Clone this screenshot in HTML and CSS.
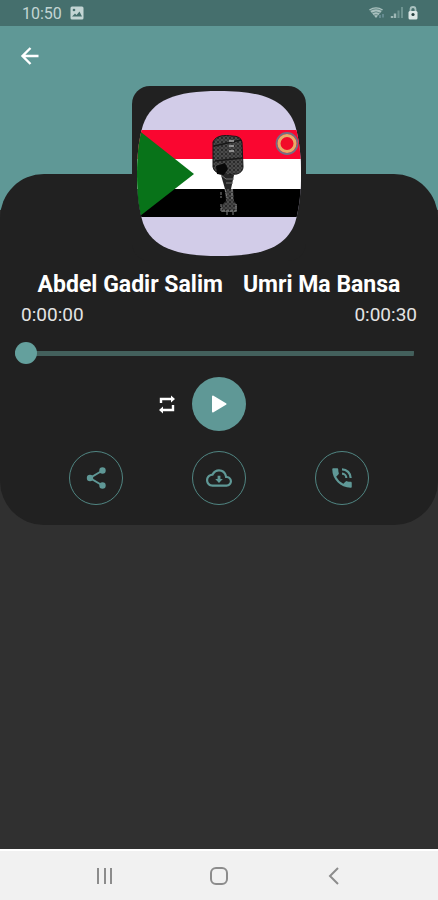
FILE: index.html
```html
<!DOCTYPE html>
<html lang="en">
<head>
<meta charset="utf-8">
<meta name="viewport" content="width=device-width, initial-scale=1">
<title>Abdel Gadir Salim - Umri Ma Bansa</title>
<link rel="stylesheet" href="styles.css">
</head>
<body>
<div class="status">
  <div class="status-group">
    <time>10:50</time>
    <svg class="picture" width="14" height="14" viewBox="0 0 14 14" aria-hidden="true"><rect x="0.5" y="0.5" width="13" height="13" rx="1.5" fill="#c3d5d4"/><path d="M2 10.5 5 7.5 6.5 9 9.5 5.5 12 10.500z" fill="#456f6d"/><circle cx="4" cy="4" r="1.300" fill="#456f6d"/></svg>
  </div>
  <div class="status-group status-icons">
    <svg width="18" height="16" viewBox="0 0 18 16" aria-hidden="true"><path d="M1 4.500Q8 0 15 4.500L8 13z" fill="#a9c0be"/><path d="M2 5.800Q8 2 14 5.800M4 8Q8 5.500 12 8M6 10.200Q8 9 10 10.200" fill="none" stroke="#537b79" stroke-width="0.800"/><path d="M12 13V10M15 9V12.500" stroke="#7397a0" stroke-width="1.400"/></svg>
    <svg width="14" height="14" viewBox="0 0 14 14" aria-hidden="true"><path d="M2 12V10M5 12V7.500" stroke="#9db7b5" stroke-width="2.400"/><path d="M8.500 12V4.500M12 12V1" stroke="#6e9491" stroke-width="2"/></svg>
    <svg width="10" height="14" viewBox="0 0 10 14" aria-hidden="true"><path d="M2.500 6V3.500a2.500 2.500 0 0 1 5 0V6" fill="none" stroke="#a9c1bf" stroke-width="1.800"/><rect x="0.500" y="5" width="9" height="8.500" rx="1.500" fill="#dce7e6"/><circle cx="5" cy="8.500" r="1.600" fill="#25403f"/></svg>
  </div>
</div>
<header class="hero">
  <button class="back" type="button" aria-label="Back">
    <svg width="24" height="24" viewBox="0 0 24 24" fill="none" stroke="#fff" stroke-width="2.400" aria-hidden="true"><path d="M20.500 12H4.500M12.500 4l-8 8 8 8"/></svg>
  </button>
</header>
<main class="player">
  <div class="cover">
    <svg class="art" viewBox="0 0 164 165" role="img" aria-label="Flag of Sudan with a microphone">
      <defs>
        <clipPath id="shape"><path d="M82 0C126 0 149 9 158 34C163 51 164 68 164 83C164 98 163 115 158 132C149 156 126 165 82 165C38 165 15 156 6 132C1 115 0 98 0 83C0 68 1 51 6 34C15 9 38 0 82 0Z"/></clipPath>
        <pattern id="grain" width="4" height="4" patternUnits="userSpaceOnUse"><rect width="4" height="4" fill="#292929"/><path d="M0 1h2M2 3h2" stroke="#858585" stroke-width="0.700"/><path d="M3 0v2" stroke="#555" stroke-width="0.700"/></pattern>
      </defs>
      <g clip-path="url(#shape)">
        <rect width="164" height="165" fill="#d2cce8"/>
        <rect y="39" width="164" height="29" fill="#fa0630"/>
        <rect y="68" width="164" height="30" fill="#fff"/>
        <rect y="98" width="164" height="28" fill="#000"/>
        <path d="M0 38 57 83 3 125 0 126z" fill="#087319"/>
        <path d="M76 51C79 44 88 44 95 45Q104 45 105 51L106 76Q106 81 100 83L87 84Q77 82 76 76z" fill="url(#grain)" stroke="#171717"/>
        <path d="M77 55 104 49M78 70l28-3" stroke="#171717" stroke-width="1.500"/>
        <path d="M92 50h5M92 55h5M92 60h5" stroke="#aaa" stroke-width="1.500"/>
        <path d="M79 75l9-3 3 6-4 6-7-1z" fill="#080808"/>
        <path d="M84 84h13l-3 14h-6z" fill="#252525"/>
        <path d="M84 84l5 4h8M89 92h7" fill="none" stroke="#777" stroke-width="1"/>
        <path d="M88 98h8l1 12 3 4v7H84v-6l5-5z" fill="url(#grain)"/>
        <path d="M84 101v6M88 98l2 9M95 98v10M84 113v7h15v-7M90 121v4M96 121v4" fill="none" stroke="#858585" stroke-width="1" stroke-dasharray="3 1"/>
        <circle cx="150" cy="52.500" r="10.500" fill="none" stroke="#747083" stroke-width="1.800"/>
        <circle cx="150" cy="52.500" r="8" fill="#f20a29" stroke="#e7ad68" stroke-width="3"/>
      </g>
    </svg>
  </div>
  <h1 class="title"><span>Abdel Gadir Salim</span><span>Umri Ma Bansa</span></h1>
  <div class="times"><span>0:00:00</span><span>0:00:30</span></div>
  <input class="seek" type="range" min="0" max="30" value="0" aria-label="Playback position">
  <div class="controls">
    <button class="repeat" type="button" aria-label="Repeat">
      <svg width="18" height="20" viewBox="0 0 18 20" aria-hidden="true"><path d="M3 9V5h10M15 11v5H5" fill="none" stroke="#fff" stroke-width="2.400"/><path d="M13 1.500 17 5l-4 3.500zM5 12.500 1 16l4 3.500z" fill="#fff"/></svg>
    </button>
    <button class="play" type="button" aria-label="Play">
      <svg width="18" height="20" viewBox="0 0 18 20" aria-hidden="true"><path d="M3 2.500 15.500 10 3 17.500z" fill="#fff" stroke="#fff" stroke-width="2" stroke-linejoin="round"/></svg>
    </button>
  </div>
  <div class="actions">
    <button type="button" aria-label="Share">
      <svg width="24" height="24" viewBox="0 0 24 24" aria-hidden="true"><path d="M18.500 4.500 6 12l12.500 7.500" fill="none" stroke="currentColor" stroke-width="2"/><g fill="currentColor"><circle cx="18.500" cy="4.500" r="3.200"/><circle cx="6" cy="12" r="3.200"/><circle cx="18.500" cy="19.500" r="3.200"/></g></svg>
    </button>
    <button type="button" aria-label="Download">
      <svg width="26" height="26" viewBox="0 0 24 24" fill="currentColor" aria-hidden="true"><path d="M19.350 10.040C18.670 6.590 15.640 4 12 4 9.110 4 6.600 5.640 5.350 8.040 2.340 8.360 0 10.910 0 14c0 3.310 2.690 6 6 6h13c2.760 0 5-2.240 5-5 0-2.640-2.050-4.780-4.650-4.960zM19 18H6c-2.210 0-4-1.790-4-4 0-2.050 1.530-3.760 3.560-3.970l1.070-.11.5-.95C8.080 7.140 9.940 6 12 6c2.620 0 4.880 1.860 5.390 4.430l.3 1.500 1.530.11c1.560.1 2.780 1.410 2.780 2.960 0 1.650-1.350 3-3 3z"/><path d="M10.700 10h2.600v3h2.200L12 16.500 8.500 13h2.200z"/></svg>
    </button>
    <button type="button" aria-label="Set as ringtone">
      <svg width="26" height="26" viewBox="0 0 24 24" fill="currentColor" aria-hidden="true"><path d="M20 15.500c-1.250 0-2.450-.2-3.570-.57a1 1 0 0 0-1.020.24l-2.200 2.200a15.050 15.050 0 0 1-6.590-6.590l2.200-2.210a1 1 0 0 0 .25-1A11.360 11.360 0 0 1 8.500 4c0-.55-.45-1-1-1H4c-.55 0-1 .45-1 1 0 9.390 7.610 17 17 17 .55 0 1-.45 1-1v-3.500c0-.55-.45-1-1-1zM19 12h2a9 9 0 0 0-9-9v2a7 7 0 0 1 7 7zm-4 0h2a5 5 0 0 0-5-5v2a3 3 0 0 1 3 3z"/></svg>
    </button>
  </div>
</main>
<nav class="nav" aria-label="System">
  <button type="button" aria-label="Recent apps"><svg width="20" height="20" viewBox="0 0 20 20" fill="none" stroke="#8c8c8c" stroke-width="2" aria-hidden="true"><path d="M3 2v16M10 2v16M16 2v16"/></svg></button>
  <button type="button" aria-label="Home"><svg width="20" height="20" viewBox="0 0 20 20" fill="none" stroke="#8c8c8c" stroke-width="2" aria-hidden="true"><rect x="2" y="2" width="16" height="16" rx="5"/></svg></button>
  <button type="button" aria-label="Back"><svg width="20" height="20" viewBox="0 0 20 20" fill="none" stroke="#8c8c8c" stroke-width="2" aria-hidden="true"><path d="M14 2 6 10l8 8"/></svg></button>
</nav>
</body>
</html>
```
FILE: styles.css
```css
* { box-sizing: border-box; }

body {
  margin: 0;
  min-height: 100vh;
  display: flex;
  flex-direction: column;
  background: #303030;
  color: #fff;
  font-family: Roboto, "Liberation Sans", sans-serif;
}

button {
  display: flex;
  align-items: center;
  justify-content: center;
  padding: 0;
  border: 0;
  background: none;
  color: #5f9896;
  cursor: pointer;
}

svg { display: block; }

.status {
  display: flex;
  justify-content: space-between;
  align-items: center;
  height: 26px;
  padding: 0 20px 0 22px;
  background: #456f6d;
  color: #c3d5d4;
  font-size: 16px;
}

.status-group { display: flex; align-items: center; gap: 8px; }
.status-icons { gap: 4px; }

.hero {
  height: 184px;
  padding: 16px 16px 0;
  background: #5f9896;
}

.back { width: 28px; height: 28px; }

.player {
  display: flex;
  flex-direction: column;
  margin-top: -36px;
  padding-bottom: 20px;
  border-radius: 44px;
  background: #212121;
}

.cover {
  align-self: center;
  width: 174px;
  margin-top: -88px;
  padding: 5px;
  border-radius: 18px;
  background: #212121;
}

.art { width: 100%; height: auto; }

.title {
  display: flex;
  justify-content: center;
  gap: 20px;
  margin: 8px 0 0;
  font-size: 23px;
  line-height: 32px;
  font-weight: 700;
}

.times {
  display: flex;
  justify-content: space-between;
  padding: 0 21px;
  color: #e4e4e4;
  font-size: 19px;
  line-height: 28px;
}

.seek {
  appearance: none;
  height: 24px;
  margin: 12px 24px 0 15px;
  border-radius: 12px;
  background: linear-gradient(#43605c, #43605c) center / 100% 5px no-repeat;
}

.seek::-webkit-slider-thumb {
  appearance: none;
  width: 22px;
  height: 22px;
  border-radius: 50%;
  background: #64a09d;
}

.controls {
  display: grid;
  grid-template-columns: 1fr 54px 1fr;
  align-items: center;
  column-gap: 16px;
  margin-top: 12px;
}

.repeat { justify-self: end; }

.play {
  width: 54px;
  height: 54px;
  border-radius: 50%;
  background: #5f9896;
}

.actions {
  display: flex;
  justify-content: space-evenly;
  margin-top: 20px;
}

.actions button {
  width: 54px;
  height: 54px;
  border: 1px solid #508582;
  border-radius: 50%;
}

.nav {
  display: flex;
  justify-content: space-evenly;
  align-items: center;
  height: 51px;
  margin-top: auto;
  border-top: 2px solid #fff;
  background: #f1f1f1;
}
```
